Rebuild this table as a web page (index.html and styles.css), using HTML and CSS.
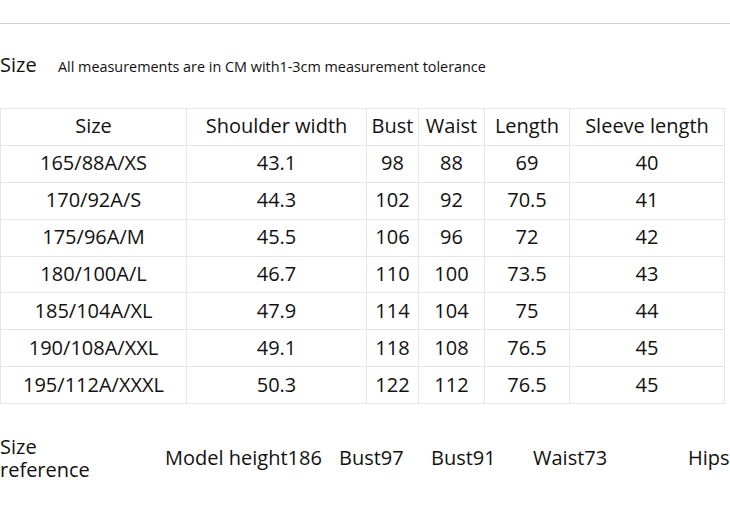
FILE: index.html
```html
<!DOCTYPE html>
<html>
<head>
<meta charset="utf-8">
<link rel="stylesheet" href="styles.css">
</head>
<body>
<div class="page">
  <div class="rule"></div>
  <div class="title">
    <span class="title-main">Size</span>
    <span class="title-note">All measurements are in CM with1-3cm measurement tolerance</span>
  </div>
  <table class="sizes">
    <colgroup>
      <col class="c1"><col class="c2"><col class="c3"><col class="c4"><col class="c5"><col class="c6">
    </colgroup>
    <tr><td>Size</td><td>Shoulder width</td><td>Bust</td><td>Waist</td><td>Length</td><td>Sleeve length</td></tr>
    <tr><td>165/88A/XS</td><td>43.1</td><td>98</td><td>88</td><td>69</td><td>40</td></tr>
    <tr><td>170/92A/S</td><td>44.3</td><td>102</td><td>92</td><td>70.5</td><td>41</td></tr>
    <tr><td>175/96A/M</td><td>45.5</td><td>106</td><td>96</td><td>72</td><td>42</td></tr>
    <tr><td>180/100A/L</td><td>46.7</td><td>110</td><td>100</td><td>73.5</td><td>43</td></tr>
    <tr><td>185/104A/XL</td><td>47.9</td><td>114</td><td>104</td><td>75</td><td>44</td></tr>
    <tr><td>190/108A/XXL</td><td>49.1</td><td>118</td><td>108</td><td>76.5</td><td>45</td></tr>
    <tr><td>195/112A/XXXL</td><td>50.3</td><td>122</td><td>112</td><td>76.5</td><td>45</td></tr>
  </table>
  <div class="ref">
    <div class="ref-label"><div class="ref-line">Size</div><div class="ref-line">reference</div></div>
    <div class="ref-item r1">Model height186</div>
    <div class="ref-item r2">Bust97</div>
    <div class="ref-item r3">Bust91</div>
    <div class="ref-item r4">Waist73</div>
    <div class="ref-item r5">Hips</div>
  </div>
</div>
</body>
</html>
```

FILE: styles.css
```css
html, body {
  margin: 0;
  padding: 0;
  background: #fff;
}
body {
  font-family: "Open Sans", "Noto Sans CJK SC", sans-serif;
  color: #111;
  width: 730px;
  height: 507px;
  overflow: hidden;
}
.page {
  width: 730px;
}
.rule {
  margin-top: 23px;
  height: 0;
  border-top: 1px solid #d0d0d0;
}
.title {
  display: flex;
  align-items: baseline;
  height: 84px;
  box-sizing: border-box;
  padding-top: 27px;
}
.title-main {
  font-size: 20px;
  width: 58px;
}
.title-note {
  font-size: 14.4px;
}
.sizes {
  border-collapse: collapse;
  table-layout: fixed;
  width: 724px;
}
.c1 { width: 186px; }
.c2 { width: 180px; }
.c3 { width: 52px; }
.c4 { width: 66px; }
.c5 { width: 85px; }
.c6 { width: 155px; }
.sizes td {
  border: 1px solid #e6e6e6;
  height: 33.9px;
  padding: 0 0 2px;
  text-align: center;
  font-size: 20px;
  white-space: nowrap;
}
.ref {
  display: flex;
  align-items: center;
  margin-top: 31px;
  font-size: 20px;
}
.ref-label {
  width: 165px;
}
.ref-line {
  height: 23px;
  line-height: 23px;
}
.ref-item {
  white-space: nowrap;
  padding-bottom: 2px;
}
.r1 { width: 174px; }
.r2 { width: 92px; }
.r3 { width: 102px; }
.r4 { width: 155px; }
```
